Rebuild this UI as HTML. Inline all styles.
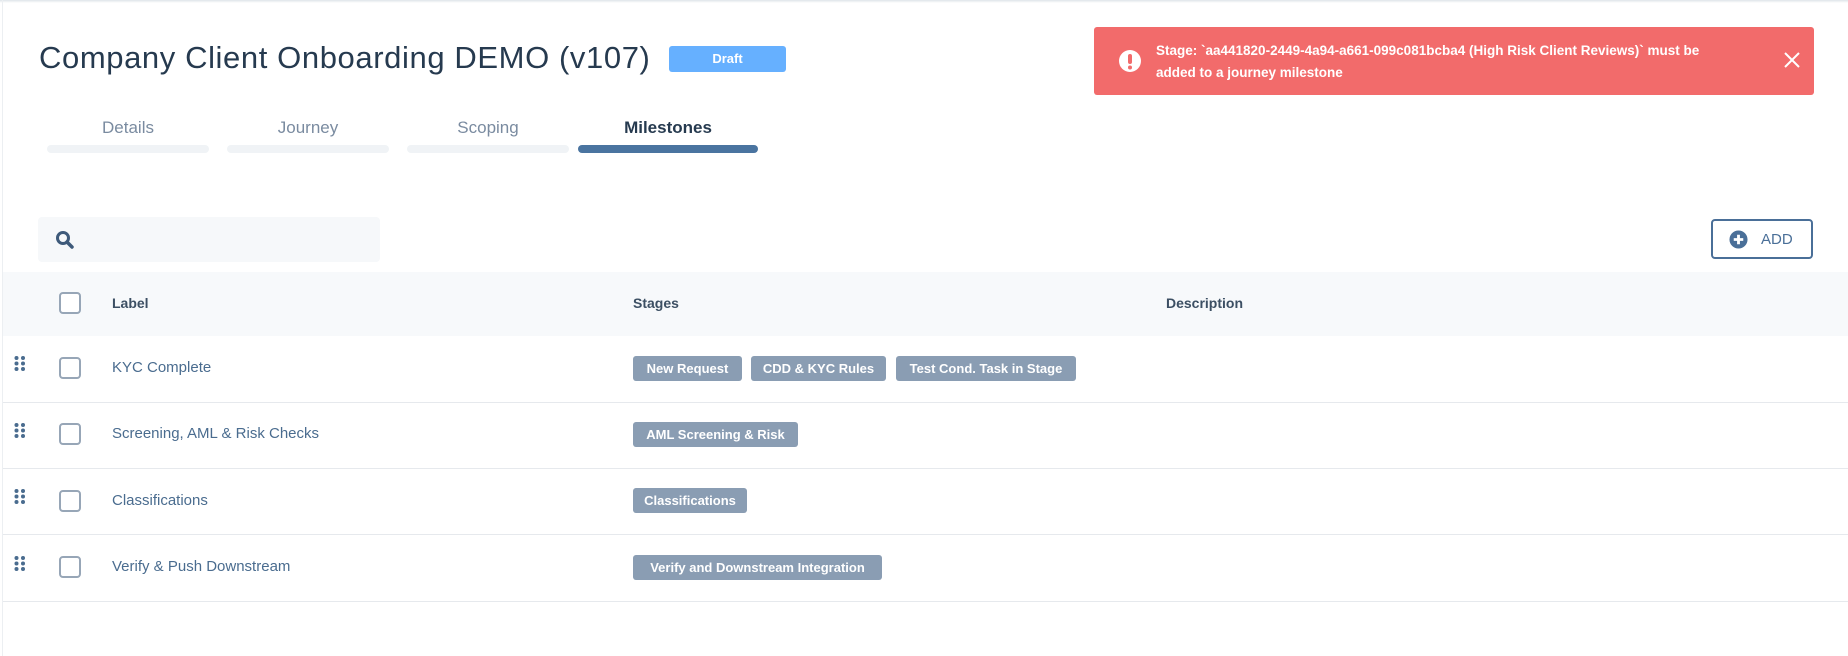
<!DOCTYPE html>
<html><head><meta charset="utf-8"><style>
*{box-sizing:border-box;margin:0;padding:0}
body{width:1848px;height:656px;background:#fff;font-family:"Liberation Sans",sans-serif;position:relative;overflow:hidden}
.abs{position:absolute}
.topline{left:0;top:0;width:1848px;height:3px;background:linear-gradient(#dfe4ea,#fff)}
.leftline{left:2px;top:0;width:1px;height:656px;background:#eceff2}
.title{left:39px;top:40px;font-size:31px;color:#263a4f;white-space:nowrap;letter-spacing:0.6px}
.draft{left:669px;top:46px;width:117px;height:26px;background:#66b0ff;border-radius:3px;color:#fff;font-weight:bold;font-size:13px;text-align:center;line-height:26px}
.toast{left:1094px;top:27px;width:720px;height:68px;background:#f26b6b;border-radius:3px}
.toast .txt{position:absolute;left:62px;top:13px;color:#fff;font-weight:bold;font-size:13.5px;line-height:22px;width:585px}
.tab{top:118px;font-size:17px;color:#7a8ba0;text-align:center}
.bar{top:145px;height:8px;border-radius:4px;background:#f0f3f6}
.search{left:38px;top:217px;width:342px;height:45px;background:#f6f8fa;border-radius:4px}
.add{left:1711px;top:219px;width:102px;height:40px;border:2px solid #4a6f98;border-radius:4px;color:#4a6f98;font-size:15px}
.head{left:3px;top:272px;width:1845px;height:64px;background:#f7f9fb}
.cb{width:22px;height:22px;border:2px solid #97a6b7;border-radius:4px;background:#fff}
.hd{font-weight:bold;font-size:14px;color:#3c4f63}
.sep{left:3px;width:1845px;height:1px;background:#e6e9ed}
.lbl{font-size:15px;color:#4a6c8f;left:112px}
.pill{height:25px;background:#8a9db3;border-radius:3px;color:#fff;font-weight:bold;font-size:13px;line-height:25px;text-align:center;white-space:nowrap}
.dots{left:14px;width:12px;height:15px}
</style></head><body>
<div class="abs topline"></div>
<div class="abs leftline"></div>
<div class="abs title">Company Client Onboarding DEMO (v107)</div>
<div class="abs draft">Draft</div>

<div class="abs toast">
<svg style="position:absolute;left:22px;top:20px" width="28" height="28" viewBox="0 0 28 28"><circle cx="14" cy="14" r="11" fill="#fff"/><rect x="12" y="7" width="4" height="10" rx="2" fill="#f26b6b"/><circle cx="14" cy="20.5" r="2" fill="#f26b6b"/></svg>
<div class="txt">Stage: `aa441820-2449-4a94-a661-099c081bcba4 (High Risk Client Reviews)` must be added to a journey milestone</div>
<svg style="position:absolute;left:688px;top:23px" width="20" height="20" viewBox="0 0 20 20"><path d="M3 3L17 17M17 3L3 17" stroke="#fff" stroke-width="2"/></svg>
</div>

<div class="abs tab" style="left:47px;width:162px">Details</div>
<div class="abs tab" style="left:227px;width:162px">Journey</div>
<div class="abs tab" style="left:407px;width:162px">Scoping</div>
<div class="abs tab" style="left:578px;width:180px;color:#263a4f;font-weight:bold">Milestones</div>
<div class="abs bar" style="left:47px;width:162px"></div>
<div class="abs bar" style="left:227px;width:162px"></div>
<div class="abs bar" style="left:407px;width:162px"></div>
<div class="abs bar" style="left:578px;width:180px;background:#4a74a0"></div>

<div class="abs search"><svg style="position:absolute;left:17px;top:13px" width="20" height="20" viewBox="0 0 20 20"><circle cx="8" cy="8" r="5.5" fill="none" stroke="#3e5a7a" stroke-width="3"/><path d="M12 12L17 17" stroke="#3e5a7a" stroke-width="3.5" stroke-linecap="round"/></svg></div>
<div class="abs add"><svg style="position:absolute;left:16px;top:9px" width="19" height="19" viewBox="0 0 20 20"><circle cx="10" cy="10" r="9.5" fill="#4a6f98"/><path d="M10 5V15M5 10H15" stroke="#fff" stroke-width="3"/></svg><span style="position:absolute;left:48px;top:10px">ADD</span></div>

<div class="abs head"></div>
<div class="abs cb" style="left:59px;top:292px"></div>
<div class="abs hd" style="left:112px;top:295px">Label</div>
<div class="abs hd" style="left:633px;top:295px">Stages</div>
<div class="abs hd" style="left:1166px;top:295px">Description</div>

<div class="abs sep" style="top:402px"></div>
<div class="abs sep" style="top:468px"></div>
<div class="abs sep" style="top:534px"></div>
<div class="abs sep" style="top:601px"></div>

<svg class="abs dots" style="top:356px" viewBox="0 0 12 15"><g fill="#4a6c8f"><circle cx="2.5" cy="2" r="2"/><circle cx="9" cy="2" r="2"/><circle cx="2.5" cy="7.5" r="2"/><circle cx="9" cy="7.5" r="2"/><circle cx="2.5" cy="13" r="2"/><circle cx="9" cy="13" r="2"/></g></svg>
<svg class="abs dots" style="top:423px" viewBox="0 0 12 15"><g fill="#4a6c8f"><circle cx="2.5" cy="2" r="2"/><circle cx="9" cy="2" r="2"/><circle cx="2.5" cy="7.5" r="2"/><circle cx="9" cy="7.5" r="2"/><circle cx="2.5" cy="13" r="2"/><circle cx="9" cy="13" r="2"/></g></svg>
<svg class="abs dots" style="top:489px" viewBox="0 0 12 15"><g fill="#4a6c8f"><circle cx="2.5" cy="2" r="2"/><circle cx="9" cy="2" r="2"/><circle cx="2.5" cy="7.5" r="2"/><circle cx="9" cy="7.5" r="2"/><circle cx="2.5" cy="13" r="2"/><circle cx="9" cy="13" r="2"/></g></svg>
<svg class="abs dots" style="top:556px" viewBox="0 0 12 15"><g fill="#4a6c8f"><circle cx="2.5" cy="2" r="2"/><circle cx="9" cy="2" r="2"/><circle cx="2.5" cy="7.5" r="2"/><circle cx="9" cy="7.5" r="2"/><circle cx="2.5" cy="13" r="2"/><circle cx="9" cy="13" r="2"/></g></svg>

<div class="abs cb" style="left:59px;top:357px"></div>
<div class="abs cb" style="left:59px;top:423px"></div>
<div class="abs cb" style="left:59px;top:490px"></div>
<div class="abs cb" style="left:59px;top:556px"></div>

<div class="abs lbl" style="top:359px">KYC Complete</div>
<div class="abs lbl" style="top:425px">Screening, AML &amp; Risk Checks</div>
<div class="abs lbl" style="top:492px">Classifications</div>
<div class="abs lbl" style="top:558px">Verify &amp; Push Downstream</div>

<div class="abs pill" style="left:633px;top:356px;width:109px">New Request</div>
<div class="abs pill" style="left:751px;top:356px;width:135px">CDD &amp; KYC Rules</div>
<div class="abs pill" style="left:896px;top:356px;width:180px">Test Cond. Task in Stage</div>
<div class="abs pill" style="left:633px;top:422px;width:165px">AML Screening &amp; Risk</div>
<div class="abs pill" style="left:633px;top:488px;width:114px">Classifications</div>
<div class="abs pill" style="left:633px;top:555px;width:249px">Verify and Downstream Integration</div>
</body></html>
